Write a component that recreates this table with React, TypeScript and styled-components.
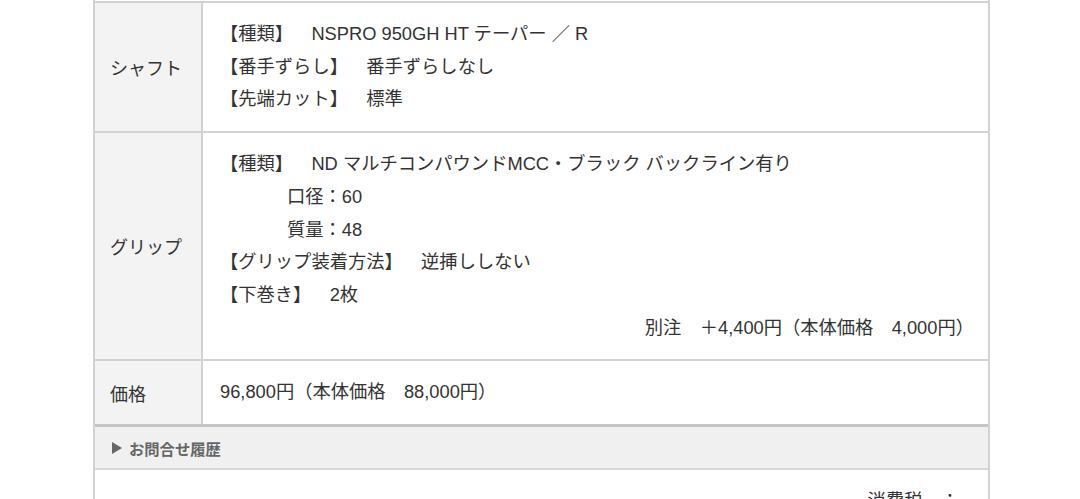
import React from "react";
import styled, { createGlobalStyle } from "styled-components";

const Global = createGlobalStyle`
  html, body { margin: 0; padding: 0; background: #fff; }
  body {
    font-family: "Liberation Sans", "Noto Sans CJK JP", sans-serif;
    color: #333;
    overflow: hidden;
    text-spacing-trim: space-all;
  }
`;

const Frame = styled.div`
  margin-left: 93px;
  width: 897px;
  min-height: 499px;
  box-sizing: border-box;
  border-left: 2px solid #d2d2d2;
  border-right: 2px solid #d2d2d2;
  padding-top: 1px;
`;

const Table = styled.div`
  display: flex;
  flex-direction: column;
  border-bottom: 3px solid #c4c4c4;
`;

const Row = styled.div`
  display: grid;
  grid-template-columns: 108px 1fr;
  border-top: 2px solid #d2d2d2;
`;

const Label = styled.div`
  background: #f3f3f3;
  border-right: 2px solid #d2d2d2;
  padding: 0 15px;
  display: flex;
  align-items: center;
  font-size: 18px;
  white-space: nowrap;
`;

const Cell = styled.div`
  padding: 15px 14px 15px 17px;
  font-size: 18.3px;
  line-height: 32.7px;
`;

const Line = styled.div<{ $indent?: number; $right?: boolean }>`
  padding-left: ${(p) => p.$indent ?? 0}px;
  text-align: ${(p) => (p.$right ? "right" : "left")};
  white-space: nowrap;
`;

const Accordion = styled.div`
  background: #f0f0f0;
  border-bottom: 2px solid #d8d8d8;
  height: 41px;
  display: flex;
  align-items: center;
  gap: 7px;
  padding-left: 17px;
  color: #666;
  font-size: 15.3px;
  font-weight: bold;
`;

const Arrow = styled.span`
  width: 0;
  height: 0;
  border-top: 6px solid transparent;
  border-bottom: 6px solid transparent;
  border-left: 10px solid #666;
`;

const Summary = styled.div`
  padding: 19px 29px 0 0;
  display: flex;
  justify-content: flex-end;
  font-size: 18.3px;
  line-height: 24px;
`;

export default function App() {
  return (
    <>
      <Global />
      <Frame>
        <Table>
          <Row>
            <Label>シャフト</Label>
            <Cell>
              <Line>【種類】　NSPRO 950GH HT テーパー ／ R</Line>
              <Line>【番手ずらし】　番手ずらしなし</Line>
              <Line>【先端カット】　標準</Line>
            </Cell>
          </Row>
          <Row>
            <Label>グリップ</Label>
            <Cell>
              <Line>【種類】　ND マルチコンパウンドMCC・ブラック バックライン有り</Line>
              <Line $indent={67}>口径：60</Line>
              <Line $indent={67}>質量：48</Line>
              <Line>【グリップ装着方法】　逆挿ししない</Line>
              <Line>【下巻き】　2枚</Line>
              <Line $right>別注　＋4,400円（本体価格　4,000円）</Line>
            </Cell>
          </Row>
          <Row>
            <Label>価格</Label>
            <Cell>
              <Line>96,800円（本体価格　88,000円）</Line>
            </Cell>
          </Row>
        </Table>
        <Accordion>
          <Arrow />
          <span>お問合せ履歴</span>
        </Accordion>
        <Summary>消費税　：</Summary>
      </Frame>
    </>
  );
}
